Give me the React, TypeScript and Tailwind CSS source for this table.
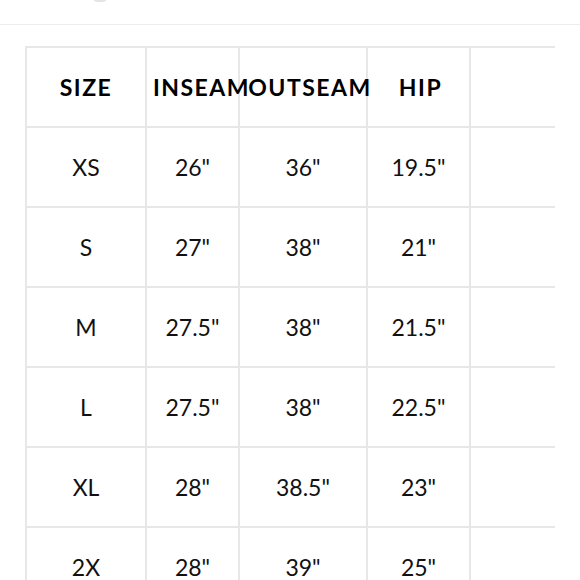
import React from 'react';

const headers = ['SIZE', 'INSEAM', 'OUTSEAM', 'HIP', ''];

const rows = [
  ['XS', '26"', '36"', '19.5"', ''],
  ['S', '27"', '38"', '21"', ''],
  ['M', '27.5"', '38"', '21.5"', ''],
  ['L', '27.5"', '38"', '22.5"', ''],
  ['XL', '28"', '38.5"', '23"', ''],
  ['2X', '28"', '39"', '25"', ''],
];

// header labels in the picture sit a bit right of the cell centre
const headerShift = ['', 'pl-[18px]', 'pl-[14px]', 'pl-[4px]', ''];

const App: React.FC = () => {
  return (
    <main
      className="h-[580px] w-[580px] overflow-hidden bg-white text-[#111]"
      style={{ fontFamily: 'Lato, "Open Sans", sans-serif' }}
    >
      {/* top bar remnant */}
      <div className="relative h-[25px] border-b border-[#eeeeec]">
        <div className="absolute left-[92px] top-[-10px] h-[12px] w-[16px] rounded-full bg-[#e4e4e4]" />
      </div>
      <div className="ml-[25px] mt-[21px] w-[530px] border-l-2 border-t-2 border-[#e8e7e5]">
        <div className="grid grid-cols-[120px_93px_128px_103px_84px]">
          {headers.map((h, i) => (
            <div
              key={i}
              className={`flex h-[80px] items-center justify-center whitespace-nowrap border-b-2 border-[#e8e7e5] text-[23px] font-bold tracking-[1.5px] text-black ${headerShift[i]} ${i < 4 ? 'border-r-2' : ''}`}
            >
              {h}
            </div>
          ))}
          {rows.map((row, r) =>
            row.map((c, i) => (
              <div
                key={`${r}-${i}`}
                className={`flex h-[80px] items-center justify-center border-b-2 border-[#e8e7e5] text-[23px] font-normal ${i < 4 ? 'border-r-2' : ''}`}
              >
                {c}
              </div>
            )),
          )}
        </div>
      </div>
    </main>
  );
};

export default App;
